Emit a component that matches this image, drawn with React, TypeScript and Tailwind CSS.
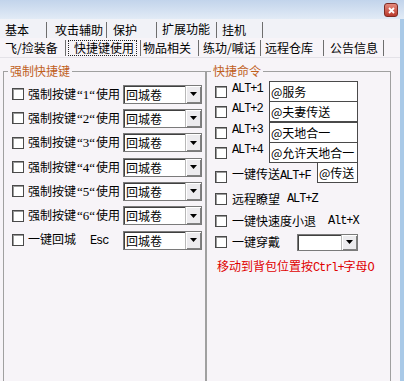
import React from 'react';

const mono = "font-['Liberation_Mono',monospace] text-[12px] tracking-[-1.1px]";

function Check() {
  return (
    <span className="inline-block w-[12px] h-[12px] shrink-0 border border-[#4a4a4a] bg-white shadow-[inset_1px_1px_0_#9a9a9a]" />
  );
}

function Arrow() {
  return (
    <svg width="7" height="4" viewBox="0 0 7 4">
      <polygon points="0,0 7,0 3.5,4" fill="#000" />
    </svg>
  );
}

function Combo({ value, w, h }: { value?: string; w: string; h: string }) {
  return (
    <div
      className={`flex ${w} ${h} shrink-0 border border-[#7a7a7a] bg-white shadow-[inset_1px_1px_0_#404040]`}
    >
      <span className="flex-1 pl-[2px] pt-[1px] leading-[15px] overflow-hidden whitespace-nowrap">
        {value}
      </span>
      <span className="flex w-[16px] items-center justify-center bg-[#ecebee] border-l border-[#b8b8b8] shadow-[inset_1px_1px_0_#ffffff,inset_-1px_-1px_0_#808080]">
        <Arrow />
      </span>
    </div>
  );
}

const topTabs = [
  { label: '基本', w: 'w-[45px]', pl: 'pl-[3px]' },
  { label: '攻击辅助', w: 'w-[60px]', pl: 'pl-[8px]' },
  { label: '保护', w: 'w-[50px]', pl: 'pl-[6px]' },
  { label: '扩展功能', w: 'w-[60px]', pl: 'pl-[5px]', active: true },
  { label: '挂机', w: 'w-[46px]', pl: 'pl-[5px]' },
];

const subTabs = [
  { label: '飞/捡装备', w: 'w-[64px]', pl: 'pl-[3px]' },
  { label: '快捷键使用', w: 'w-[75px]', pl: 'pl-[2px]', active: true },
  { label: '物品相关', w: 'w-[58px]', pl: 'pl-[2px]' },
  { label: '练功/喊话', w: 'w-[62px]', pl: 'pl-[4px]' },
  { label: '远程仓库', w: 'w-[63px]', pl: 'pl-[4px]' },
  { label: '公告信息', w: 'w-[60px]', pl: 'pl-[6px]' },
];

const forceKeys = ['1', '2', '3', '4', '5', '6'];

const altCmds = [
  { key: 'ALT+1', value: '@服务' },
  { key: 'ALT+2', value: '@夫妻传送' },
  { key: 'ALT+3', value: '@天地合一' },
  { key: 'ALT+4', value: '@允许天地合一' },
];

export default function App() {
  return (
    <div className="w-[404px] h-[381px] overflow-hidden bg-[#f7f4f8] text-[12px] text-black font-['Noto_Sans_CJK_SC','Noto_Sans',sans-serif]">
      {/* title strip */}
      <div className="flex h-[19px] justify-end pr-[6px] pt-[3px] bg-gradient-to-b from-[#c2d4eb] to-[#e2ebf6]">
        <div className="flex w-[14px] h-[14px] items-center justify-center rounded-[3px] border border-[#7d2c24] bg-gradient-to-b from-[#e4897c] to-[#b9382c]">
          <svg width="7" height="7" viewBox="0 0 7 7">
            <path d="M1 1 L6 6 M6 1 L1 6" stroke="#fff" strokeWidth="1.8" />
          </svg>
        </div>
      </div>

      <div className="flex">
        <div className="w-[400px]">
          {/* tab row 1 */}
          <div className="flex h-[19px] items-end pl-[2px] bg-[#f1f2f7]">
            {topTabs.map((t) => (
              <div
                key={t.label}
                className={`flex ${t.w} ${t.pl} h-[16px] border-r border-[#6e6e6e] ${t.active ? 'items-start' : 'items-center'}`}
              >
                <span className="leading-[14px] whitespace-nowrap">{t.label}</span>
              </div>
            ))}
          </div>

          {/* tab row 2 */}
          <div className="flex h-[20px] items-end pl-[2px] pb-[1px] border-b border-[#e4e2e8]">
            {subTabs.map((t) => (
              <div key={t.label} className={`flex ${t.w} ${t.pl} h-[16px] items-center border-r border-[#6e6e6e]`}>
                {t.active ? (
                  <span className="h-[16px] border border-dotted border-[#222] pl-[5px] pr-[2px] leading-[14px] whitespace-nowrap">
                    {t.label}
                  </span>
                ) : (
                  <span className="leading-[14px] whitespace-nowrap">{t.label}</span>
                )}
              </div>
            ))}
          </div>

          {/* content */}
          <div className="flex pl-[3px] pt-[6px]">
            <fieldset className="w-[203px] h-[330px] shrink-0 border border-[#a0a0a0]">
              <legend className="ml-[4px] px-[2px] leading-[14px] text-[#c0601c]">强制快捷键</legend>
              <div className="flex flex-col pl-[8px] pt-[4px]">
                {forceKeys.map((k) => (
                  <div key={k} className="flex h-[24.33px] items-center">
                    <Check />
                    <span className="ml-[4px] w-[95px] leading-[14px] whitespace-nowrap">
                      强制按键
                      <span className="font-['Liberation_Serif',serif] text-[13px] px-[1px]">“{k}“</span>
                      使用
                    </span>
                    <Combo value="回城卷" w="w-[79px]" h="h-[19px]" />
                  </div>
                ))}
                <div className="flex h-[24.33px] items-center">
                  <Check />
                  <span className="ml-[4px] w-[95px] leading-[14px] whitespace-nowrap">
                    一键回城<span className={`ml-[14px] ${mono}`}>Esc</span>
                  </span>
                  <Combo value="回城卷" w="w-[79px]" h="h-[19px]" />
                </div>
              </div>
            </fieldset>

            <fieldset className="w-[185px] h-[330px] shrink-0 border border-[#a0a0a0]">
              <legend className="ml-[4px] px-[2px] leading-[14px] text-[#c0601c]">快捷命令</legend>
              <div className="flex flex-col pl-[8px] pt-[3px]">
                {altCmds.map((c) => (
                  <div key={c.key} className="flex h-[20.25px] items-start">
                    <span className="mt-[3px]">
                      <Check />
                    </span>
                    <span className={`ml-[5px] mt-[1px] w-[37px] leading-[14px] ${mono}`}>{c.key}</span>
                    <div className="w-[89px] h-[21px] shrink-0 border border-[#4a4a4a] bg-white pl-[1px] leading-[19px] whitespace-nowrap">
                      {c.value}
                    </div>
                  </div>
                ))}
                <div className="flex h-[20.25px] items-start">
                  <span className="mt-[7px]">
                    <Check />
                  </span>
                  <span className="ml-[5px] mt-[5px] w-[85px] leading-[14px] whitespace-nowrap">
                    一键传送<span className={mono}>ALT+F</span>
                  </span>
                  <div className="w-[41px] h-[21px] shrink-0 border border-[#4a4a4a] bg-white pl-[1px] leading-[19px] whitespace-nowrap">
                    @传送
                  </div>
                </div>

                <div className="mt-[6px] flex h-[21.5px] items-center">
                  <Check />
                  <span className="ml-[5px] leading-[14px]">远程瞭望</span>
                  <span className={`ml-[7px] ${mono}`}>ALT+Z</span>
                </div>
                <div className="flex h-[21.5px] items-center">
                  <Check />
                  <span className="ml-[5px] leading-[14px]">一键快速度小退</span>
                  <span className={`ml-[12px] ${mono}`}>Alt+X</span>
                </div>
                <div className="flex h-[21.5px] items-center">
                  <Check />
                  <span className="ml-[5px] w-[65px] leading-[14px]">一键穿戴</span>
                  <Combo w="w-[61px]" h="h-[17px]" />
                </div>

                <div className="mt-[6px] ml-[2px] leading-[14px] text-[#e00000] whitespace-nowrap">
                  移动到背包位置按<span className={mono}>Ctrl+</span>字母<span className={mono}>O</span>
                </div>
              </div>
            </fieldset>
          </div>
        </div>
        <div className="w-[4px] self-stretch bg-[#a9c9e7]" />
      </div>
    </div>
  );
}
